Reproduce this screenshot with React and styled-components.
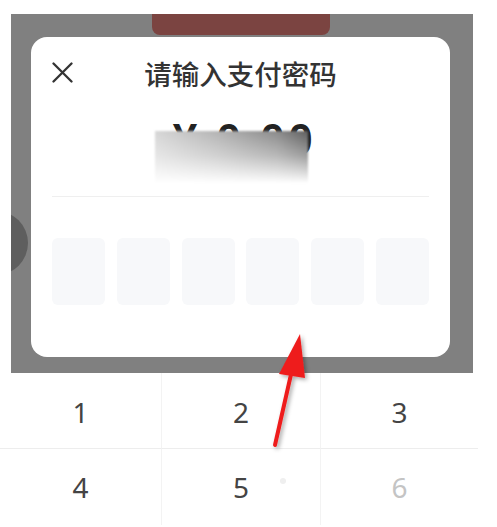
import React from 'react'
import styled, { createGlobalStyle } from 'styled-components'

const Global = createGlobalStyle`
  html, body { margin: 0; padding: 0; background: #fff; }
  body { font-family: "Noto Sans", "Noto Sans CJK SC", sans-serif; }
`

const Page = styled.div`
  position: relative;
  width: 497px;
  height: 527px;
  overflow: hidden;
  background: #fff;
`

const Stage = styled.div`
  padding: 14px 24px 0 11px;
`

const Overlay = styled.div`
  position: relative;
  overflow: hidden;
  height: 359px;
  box-sizing: border-box;
  background: #808080;
  padding-left: 20px;
`

const BehindBar = styled.div`
  width: 178px;
  height: 21px;
  margin: 0 0 2px 121px;
  background: #7b4441;
  border-radius: 0 0 8px 8px;
`

const BehindDot = styled.div`
  position: absolute;
  left: -47px;
  top: 197px;
  width: 64px;
  height: 64px;
  border-radius: 50%;
  background: #5e5e5e;
`

const Dialog = styled.div`
  position: relative;
  width: 419px;
  box-sizing: border-box;
  padding: 0 21px 52px;
  background: #fff;
  border-radius: 16px;
`

const Header = styled.div`
  position: relative;
  height: 72px;
  display: flex;
  align-items: center;
  justify-content: center;
`

const Close = styled.svg`
  position: absolute;
  left: 0;
  top: 25px;
`

const Title = styled.h2`
  margin: 0;
  font-family: "Noto Sans CJK SC", sans-serif;
  font-size: 27.5px;
  font-weight: 500;
  color: #333;
`

const AmountRow = styled.div`
  position: relative;
  margin-top: 6px;
  height: 50px;
  display: flex;
  justify-content: center;
`

const Amount = styled.div`
  font-family: "Liberation Sans", Arial, sans-serif;
  font-size: 44px;
  line-height: 50px;
  font-weight: 700;
  color: #222;
  letter-spacing: 3.5px;
  padding-left: 8px;
`

const Smudge = styled.div`
  position: absolute;
  left: 103px;
  top: 16px;
  width: 153px;
  height: 55px;
  background:
    linear-gradient(to bottom, rgba(255,255,255,0) 0%, rgba(255,255,255,0.4) 45%, #fff 95%),
    linear-gradient(to right, #d6d6d6 0%, #b4b4b4 40%, #8a8a8a 80%, #5e5e5e 100%);
  filter: blur(1px);
`

const Divider = styled.div`
  margin-top: 31px;
  height: 1px;
  background: #efefef;
`

const Boxes = styled.div`
  margin-top: 41px;
  display: grid;
  grid-template-columns: repeat(6, 1fr);
  gap: 11.6px;
`

const Box = styled.div`
  height: 67px;
  border-radius: 6px;
  background: #f7f8fa;
`

const Keyboard = styled.div`
  display: grid;
  grid-template-columns: 162px 159px 157px;
  grid-auto-rows: 76px;
  width: 478px;
`

const Key = styled.div`
  position: relative;
  display: flex;
  align-items: center;
  justify-content: center;
  font-family: "Noto Sans", Roboto, sans-serif;
  font-size: 28px;
  color: ${p => (p.$faded ? '#c4c4c4' : '#444')};
  border-right: ${p => (p.$last ? 'none' : '1px solid #f3f3f3')};
  border-bottom: ${p => (p.$top ? '1px solid #ededed' : 'none')};
  padding-top: ${p => (p.$top ? '2px' : '0')};
`

const PressDot = styled.span`
  position: absolute;
  left: 118px;
  top: 29px;
  width: 6px;
  height: 6px;
  border-radius: 50%;
  background: #efefef;
`

const Arrow = styled.svg`
  position: absolute;
  left: 0;
  top: 0;
  pointer-events: none;
`

const keys = ['1', '2', '3', '4', '5', '6']

export default function App() {
  return (
    <>
      <Global />
      <Page>
        <Stage>
          <Overlay>
            <BehindBar />
            <BehindDot />
            <Dialog>
              <Header>
                <Close width="21" height="21" viewBox="0 0 21 21">
                  <path d="M1.5 1.5 L19.5 19.5 M19.5 1.5 L1.5 19.5" stroke="#333" strokeWidth="2.3" strokeLinecap="round" />
                </Close>
                <Title>请输入支付密码</Title>
              </Header>
              <AmountRow>
                <Amount>¥ 0.00</Amount>
                <Smudge />
              </AmountRow>
              <Divider />
              <Boxes>
                {[0, 1, 2, 3, 4, 5].map(i => <Box key={i} />)}
              </Boxes>
            </Dialog>
          </Overlay>
        </Stage>
        <Keyboard>
          {keys.map((k, i) => (
            <Key key={k} $top={i < 3} $last={i % 3 === 2} $faded={k === '6'}>
              {k}
              {k === '5' && <PressDot />}
            </Key>
          ))}
        </Keyboard>
        <Arrow width="497" height="527" viewBox="0 0 497 527">
          <defs>
            <filter id="sh" x="-50%" y="-50%" width="200%" height="200%">
              <feDropShadow dx="2" dy="2" stdDeviation="2" floodColor="#000" floodOpacity="0.35" />
            </filter>
          </defs>
          <g filter="url(#sh)">
            <line x1="275" y1="445" x2="292" y2="370" stroke="#ee1d1d" strokeWidth="4" strokeLinecap="round" />
            <polygon points="300,334 279,374 305,378" fill="#ee1d1d" />
          </g>
        </Arrow>
      </Page>
    </>
  )
}
